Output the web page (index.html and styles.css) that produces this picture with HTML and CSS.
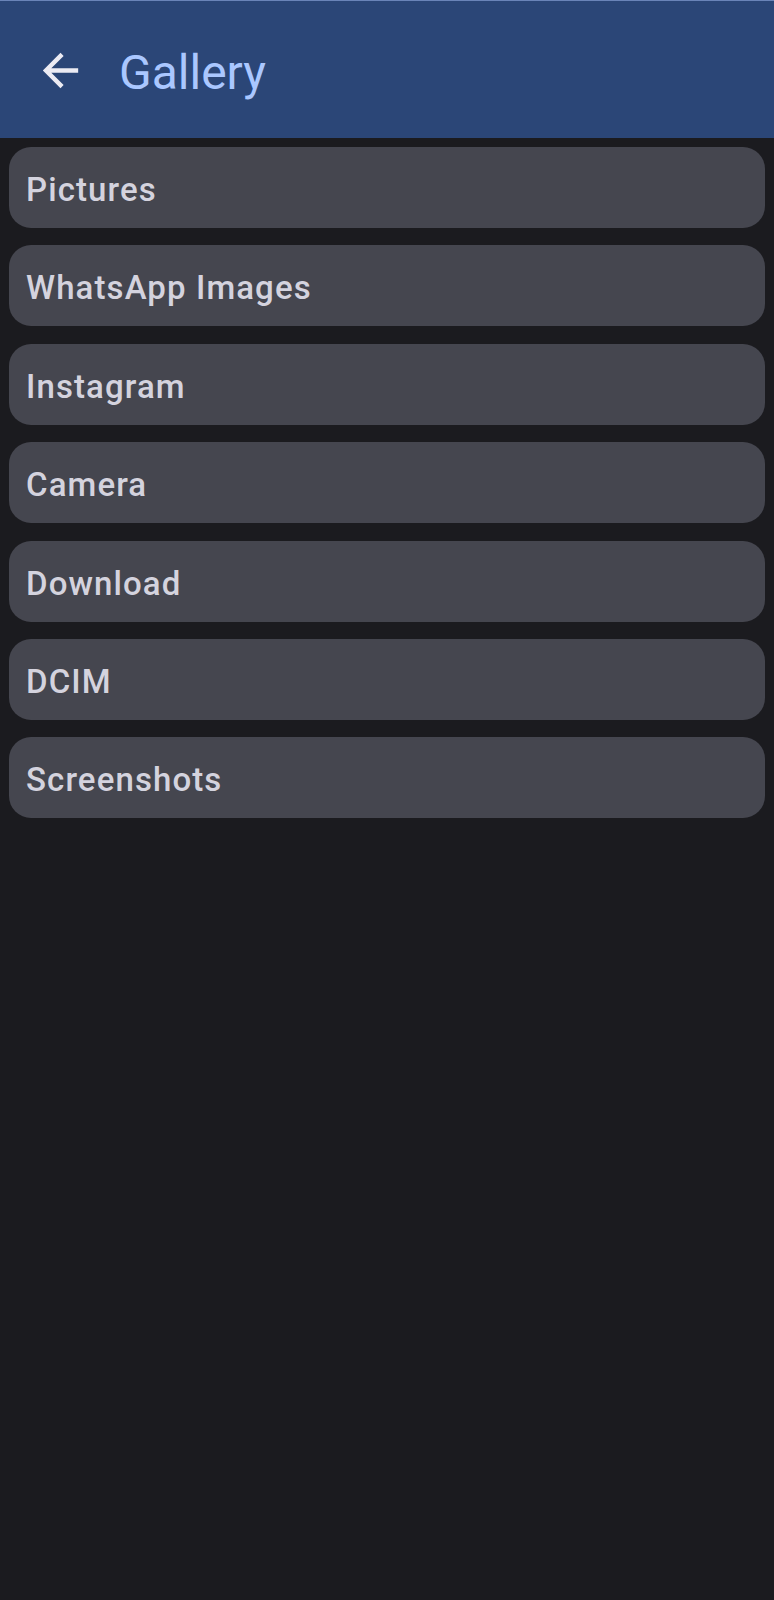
FILE: index.html
```
<!DOCTYPE html>
<html>
<head>
<meta charset="utf-8">
<link rel="stylesheet" href="styles.css">
</head>
<body>
<header class="appbar">
  <button class="back" aria-label="Back">
    <svg viewBox="0 0 24 24" width="53" height="53"><path d="M20 11H7.83l5.59-5.59L12 4l-8 8 8 8 1.41-1.41L7.83 13H20v-2z" fill="currentColor"/></svg>
  </button>
  <h1 class="title">Gallery</h1>
</header>
<main class="list">
  <div class="item">Pictures</div>
  <div class="item">WhatsApp Images</div>
  <div class="item">Instagram</div>
  <div class="item">Camera</div>
  <div class="item">Download</div>
  <div class="item">DCIM</div>
  <div class="item">Screenshots</div>
</main>
</body>
</html>
```
FILE: styles.css
```
html, body {
  margin: 0;
  padding: 0;
  background: #1b1b1f;
  font-family: Roboto, "Noto Sans", sans-serif;
  min-height: 1600px;
}
.appbar {
  height: 137px;
  background: #2b4677;
  border-top: 1px solid #6a84b8;
  display: flex;
  align-items: center;
  padding-left: 34px;
  box-sizing: content-box;
}
.back {
  background: none;
  border: none;
  padding: 0;
  margin: 0;
  color: #ecebf3;
  display: flex;
  width: 53px;
  height: 53px;
  margin-top: 2px;
}
.title {
  margin: 6px 0 0 32px;
  font-size: 48px;
  font-weight: 400;
  color: #aac7ff;
  letter-spacing: 0;
  line-height: 1;
}
.list {
  display: flex;
  flex-direction: column;
  gap: 17.4px;
  padding: 9px 9px 0 9px;
}
.item {
  height: 81px;
  box-sizing: border-box;
  padding-top: 4px;
  background: #45464f;
  border-radius: 22px;
  display: flex;
  align-items: center;
  padding-left: 17px;
  font-size: 33px;
  font-weight: 500;
  letter-spacing: 1.1px;
  color: #d4d3de;
}
```
